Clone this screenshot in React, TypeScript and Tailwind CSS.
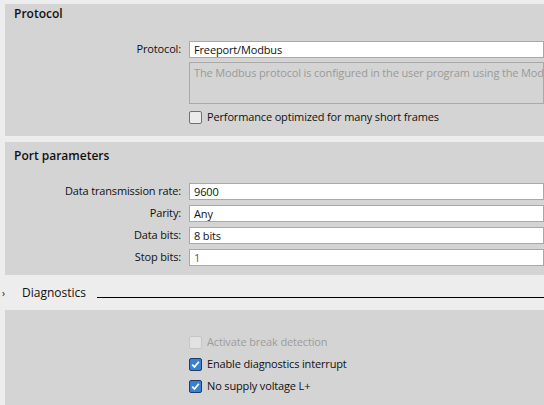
import { ReactNode } from 'react';

const Row = ({ label, children }: { label: string; children: ReactNode }) => (
    <div className="flex items-center h-[17px]">
        <div className="w-[184px] shrink-0 pr-[8px] text-right">{label}</div>
        {children}
    </div>
);

const Field = ({ value, muted }: { value: string; muted?: boolean }) => (
    <div className={`flex-1 h-[17px] bg-white border border-[#a9a9a9] pl-[4px] leading-[15px] whitespace-nowrap ${muted ? 'text-[#5a5a5a]' : ''}`}>
        {value}
    </div>
);

const Check = ({ checked, disabled, label }: { checked?: boolean; disabled?: boolean; label: string }) => (
    <div className="flex items-center h-[14px]">
        <div className="w-[184px] shrink-0" />
        {checked ? (
            <div className="w-[13px] h-[13px] rounded-[2px] border border-[#1f3e63] bg-[#3a7fd0] flex items-center justify-center">
                <svg width="9" height="9" viewBox="0 0 9 9">
                    <path d="M1.2 4.6 L3.5 7 L7.8 1.8" fill="none" stroke="#ffffff" strokeWidth="1.8" />
                </svg>
            </div>
        ) : (
            <div
                className={`w-[13px] h-[13px] rounded-[2px] border ${disabled ? 'border-[#c6c6c6] bg-[#e2e2e2]' : 'border-[#707070] bg-[#ebebeb]'}`}
            />
        )}
        <span className={`ml-[5px] ${disabled ? 'text-[#9c9c9c]' : ''}`}>{label}</span>
    </div>
);

export default function App() {
    return (
        <div
            className="w-[544px] h-[405px] overflow-hidden bg-[#ededed] text-[11px] tracking-[-0.15px] text-[#111111]"
            style={{ fontFamily: '"Open Sans", "Noto Sans", sans-serif' }}
        >
            {/* Protocol */}
            <div className="mt-[4px] ml-[5px] h-[132px] bg-[#d4d4d4]">
                <div className="pl-[9px] pt-[1px] h-[37px] text-[12px] font-semibold tracking-normal">Protocol</div>
                <Row label="Protocol:">
                    <Field value="Freeport/Modbus" />
                </Row>
                <div className="flex mt-[4px]">
                    <div className="w-[184px] shrink-0" />
                    <div className="flex-1 min-w-0 h-[42px] border border-[#a9a9a9] pl-[4px] pt-[2px] text-[#9a9a9a] leading-[16px] whitespace-nowrap overflow-hidden">
                        The Modbus protocol is configured in the user program using the Modbus instructions.
                    </div>
                </div>
                <div className="mt-[6px]">
                    <Check label="Performance optimized for many short frames" />
                </div>
            </div>

            {/* Port parameters */}
            <div className="mt-[6px] ml-[5px] h-[133px] bg-[#d4d4d4]">
                <div className="pl-[9px] pt-[5px] h-[41px] text-[12px] font-semibold tracking-normal">Port parameters</div>
                <div className="flex flex-col gap-[5px]">
                    <Row label="Data transmission rate:">
                        <Field value="9600" />
                    </Row>
                    <Row label="Parity:">
                        <Field value="Any" />
                    </Row>
                    <Row label="Data bits:">
                        <Field value="8 bits" />
                    </Row>
                    <Row label="Stop bits:">
                        <Field value="1" muted />
                    </Row>
                </div>
            </div>

            {/* Diagnostics header */}
            <div className="h-[35px] flex items-center">
                <span className="w-[22px] pl-[2px] text-[10px] leading-none">›</span>
                <span className="text-[12px] tracking-normal">Diagnostics</span>
                <div className="flex-1 ml-[11px] mt-[9px] border-t border-black" />
            </div>

            {/* Diagnostics */}
            <div className="ml-[5px] h-[95px] bg-[#d4d4d4] pt-[25px] flex flex-col gap-[8px]">
                <Check disabled label="Activate break detection" />
                <Check checked label="Enable diagnostics interrupt" />
                <Check checked label="No supply voltage L+" />
            </div>
        </div>
    );
}
